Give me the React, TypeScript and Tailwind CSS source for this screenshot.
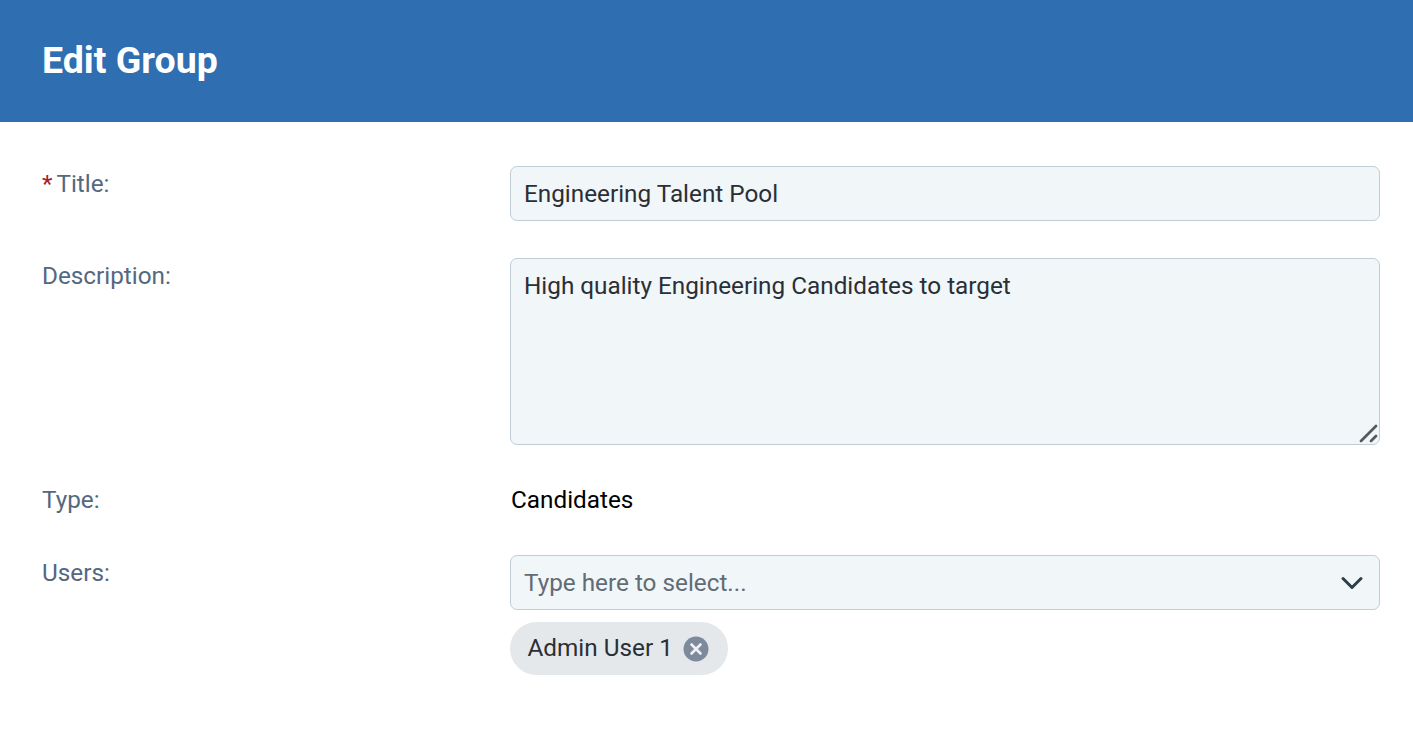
/**
 * Edit Group form
 */

const FONT = "font-['Roboto',sans-serif]";

const LABEL = 'w-[468px] shrink-0 text-[24.3px] leading-[35px] text-[#54687f]';

const FIELD =
  'w-full rounded-[7px] border border-[#c0ccd6] bg-[#f1f6f9] px-[13px] text-[24.3px] text-[#2a2f36] outline-none';

const ChevronIcon = () => (
  <svg fill="none" height="16" stroke="#2b4046" strokeLinecap="round" strokeLinejoin="round" strokeWidth="3" viewBox="0 0 24 16" width="24">
    <path d="M3 3.5 L12 12.5 L21 3.5" />
  </svg>
);

const RemoveIcon = () => (
  <svg height="26" viewBox="0 0 26 26" width="26">
    <circle cx="13" cy="13" fill="#7d8a9b" r="12.5" />
    <path d="M8.5 8.5 L17.5 17.5 M17.5 8.5 L8.5 17.5" fill="none" stroke="#eef1f4" strokeLinecap="round" strokeWidth="2.6" />
  </svg>
);

const ResizeGrip = () => (
  <svg className="pointer-events-none absolute right-[2px] bottom-[2px]" fill="none" height="19" stroke="#555a5e" strokeLinecap="round" strokeWidth="2.8" viewBox="0 0 19 19" width="19">
    <path d="M2 17 L17 2 M12 17 L17 12" />
  </svg>
);

export default function App() {
  return (
    <div className={`${FONT} min-h-[739px] bg-white`}>
      <header className="flex h-[122px] items-center bg-[#2e6eb1] pl-[42px]">
        <h1 className="text-[37.5px] leading-none font-bold text-white">Edit Group</h1>
      </header>

      <main className="flex flex-col pt-[44px] pr-[33px] pl-[42px]">
        <div className="flex">
          <div className={`${LABEL} flex`}>
            <span className="mr-[4px] text-[#a3202a]">*</span>
            Title:
          </div>
          <input className={`${FIELD} h-[55px]`} defaultValue="Engineering Talent Pool" readOnly />
        </div>

        <div className="mt-[37px] flex">
          <div className={LABEL}>Description:</div>
          <div className="relative w-full">
            <textarea
              className={`${FIELD} block h-[187px] resize-none py-[9px] leading-[36px]`}
              defaultValue="High quality Engineering Candidates to target"
              readOnly
            />
            <ResizeGrip />
          </div>
        </div>

        <div className="mt-[37px] flex items-center">
          <div className={LABEL}>Type:</div>
          <div className="pl-[1px] text-[24.3px] leading-[35px] text-black">Candidates</div>
        </div>

        <div className="mt-[38px] flex">
          <div className={LABEL}>Users:</div>
          <div className="flex w-full flex-col items-start gap-[12px]">
            <div className={`${FIELD} flex h-[55px] items-center justify-between pr-[15px]`}>
              <span className="pt-[2px] text-[#636b74]">Type here to select...</span>
              <ChevronIcon />
            </div>
            <div className="flex h-[53px] items-center gap-[10.5px] rounded-full bg-[#e5e8eb] pr-[18.5px] pl-[17.5px] text-[24.3px] text-[#2a2f36]">
              Admin User 1
              <RemoveIcon />
            </div>
          </div>
        </div>
      </main>
    </div>
  );
}
